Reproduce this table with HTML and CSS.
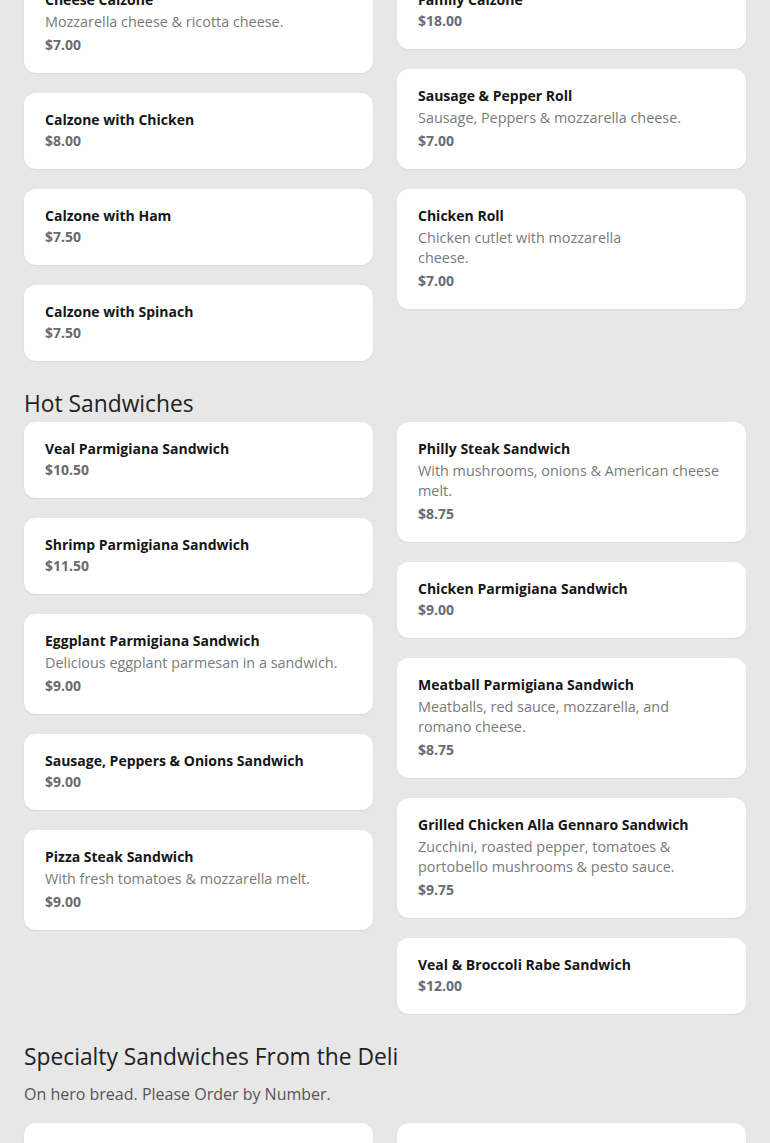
FILE: index.html
```html
<!DOCTYPE html>
<html lang="en">
<head>
<meta charset="utf-8">
<title>Menu</title>
<link rel="stylesheet" href="styles.css">
</head>
<body>
<main class="menu">
  <section class="section section-first">
    <div class="columns">
      <div class="col">
        <div class="card"><div class="name">Cheese Calzone</div><div class="desc">Mozzarella cheese &amp; ricotta cheese.</div><div class="price">$7.00</div></div>
        <div class="card"><div class="name">Calzone with Chicken</div><div class="price">$8.00</div></div>
        <div class="card"><div class="name">Calzone with Ham</div><div class="price">$7.50</div></div>
        <div class="card"><div class="name">Calzone with Spinach</div><div class="price">$7.50</div></div>
      </div>
      <div class="col">
        <div class="card"><div class="name">Family Calzone</div><div class="price">$18.00</div></div>
        <div class="card"><div class="name">Sausage &amp; Pepper Roll</div><div class="desc">Sausage, Peppers &amp; mozzarella cheese.</div><div class="price">$7.00</div></div>
        <div class="card"><div class="name">Chicken Roll</div><div class="desc narrow">Chicken cutlet with mozzarella cheese.</div><div class="price">$7.00</div></div>
      </div>
    </div>
  </section>

  <section class="section">
    <h2 class="section-title">Hot Sandwiches</h2>
    <div class="columns">
      <div class="col">
        <div class="card"><div class="name">Veal Parmigiana Sandwich</div><div class="price">$10.50</div></div>
        <div class="card"><div class="name">Shrimp Parmigiana Sandwich</div><div class="price">$11.50</div></div>
        <div class="card"><div class="name">Eggplant Parmigiana Sandwich</div><div class="desc">Delicious eggplant parmesan in a sandwich.</div><div class="price">$9.00</div></div>
        <div class="card"><div class="name">Sausage, Peppers &amp; Onions Sandwich</div><div class="price">$9.00</div></div>
        <div class="card"><div class="name">Pizza Steak Sandwich</div><div class="desc">With fresh tomatoes &amp; mozzarella melt.</div><div class="price">$9.00</div></div>
      </div>
      <div class="col">
        <div class="card"><div class="name">Philly Steak Sandwich</div><div class="desc">With mushrooms, onions &amp; American cheese melt.</div><div class="price">$8.75</div></div>
        <div class="card"><div class="name">Chicken Parmigiana Sandwich</div><div class="price">$9.00</div></div>
        <div class="card"><div class="name">Meatball Parmigiana Sandwich</div><div class="desc narrow">Meatballs, red sauce, mozzarella, and romano cheese.</div><div class="price">$8.75</div></div>
        <div class="card"><div class="name">Grilled Chicken Alla Gennaro Sandwich</div><div class="desc narrow">Zucchini, roasted pepper, tomatoes &amp; portobello mushrooms &amp; pesto sauce.</div><div class="price">$9.75</div></div>
        <div class="card"><div class="name">Veal &amp; Broccoli Rabe Sandwich</div><div class="price">$12.00</div></div>
      </div>
    </div>
  </section>

  <section class="section">
    <h2 class="section-title">Specialty Sandwiches From the Deli</h2>
    <p class="section-note">On hero bread. Please Order by Number.</p>
    <div class="columns">
      <div class="col">
        <div class="card"><div class="name">1. Italian Combo Hero</div><div class="price">$9.00</div></div>
      </div>
      <div class="col">
        <div class="card"><div class="name">2. Turkey &amp; Swiss Cheese Hero</div><div class="price">$9.00</div></div>
      </div>
    </div>
  </section>
</main>
</body>
</html>
```

FILE: styles.css
```css
* { box-sizing: border-box; }

html, body {
  margin: 0;
  padding: 0;
  background: #e7e7e7;
}

body {
  font-family: "Open Sans", "Noto Sans", "Liberation Sans", sans-serif;
  color: #1b1b1b;
}

.menu {
  padding: 0 24px 40px;
}

.section {
  margin-top: 24px;
}

.section-first {
  margin-top: -27px;
}

.section-title {
  margin: 0;
  padding-top: 1px;
  font-size: 22.8px;
  line-height: 36px;
  font-weight: 400;
  color: #222;
}

.section-note {
  margin: 7px 0 17px;
  font-size: 16px;
  line-height: 24px;
  color: #555;
}

.columns {
  display: flex;
  gap: 24px;
  align-items: flex-start;
}

.col {
  flex: 1 1 0;
  min-width: 0;
  display: flex;
  flex-direction: column;
  gap: 20px;
}

.card {
  background: #fff;
  border-radius: 12px;
  padding: 17px 21px;
  box-shadow: 0 1px 2px rgba(0, 0, 0, 0.06);
}

.name {
  font-size: 14px;
  line-height: 20px;
  font-weight: 700;
  color: #161616;
}

.desc {
  font-size: 14.4px;
  line-height: 20px;
  color: #7a7a7a;
  margin-top: 2px;
}

.desc.narrow {
  max-width: 257px;
}

.price {
  font-size: 14px;
  line-height: 22px;
  font-weight: 700;
  color: #686b74;
}

.desc + .price {
  margin-top: 2px;
}
```
